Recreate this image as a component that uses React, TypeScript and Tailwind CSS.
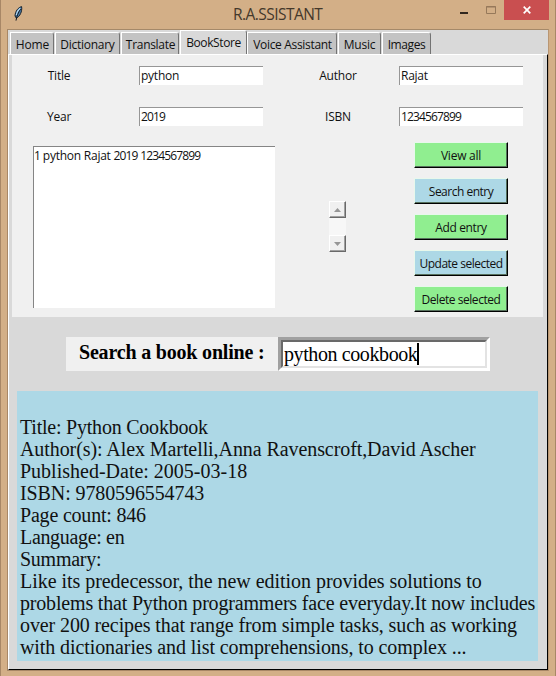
import React from "react";

const TABS = [
  { label: "Home", box: "w-[44px]", text: "tracking-[-0.1px] pl-px" },
  { label: "Dictionary", box: "w-[65px] ml-px", text: "tracking-[-0.27px]" },
  { label: "Translate", box: "w-[58px] ml-px", text: "tracking-[-0.3px] pl-px" },
  { label: "BookStore", box: "w-[67px] ml-px", text: "tracking-[-0.4px]", active: true },
  { label: "Voice Assistant", box: "w-[90px]", text: "tracking-[-0.32px] pl-px" },
  { label: "Music", box: "w-[43px] ml-px", text: "tracking-[-0.2px]" },
  { label: "Images", box: "w-[49px] ml-px", text: "tracking-[-0.4px]" },
];

const ACTIONS = [
  { label: "View all", color: "bg-[#90ee90] tracking-[-0.25px]" },
  { label: "Search entry", color: "bg-[#add8e6] tracking-[-0.5px]" },
  { label: "Add entry", color: "bg-[#90ee90] tracking-[-0.35px]" },
  { label: "Update selected", color: "bg-[#add8e6] tracking-[-0.5px]" },
  { label: "Delete selected", color: "bg-[#90ee90] tracking-[-0.45px]" },
];

const BOOK_LINES = [
  { text: "Title: Python Cookbook", spacing: "tracking-[-0.22px]" },
  { text: "Author(s): Alex Martelli,Anna Ravenscroft,David Ascher", spacing: "tracking-[-0.08px]" },
  { text: "Published-Date: 2005-03-18", spacing: "tracking-[0px]" },
  { text: "ISBN: 9780596554743", spacing: "tracking-[-0.1px]" },
  { text: "Page count: 846", spacing: "tracking-[-0.2px]" },
  { text: "Language: en", spacing: "tracking-[-0.33px]" },
  { text: "Summary:", spacing: "tracking-[-0.25px]" },
  { text: "Like its predecessor, the new edition provides solutions to", spacing: "tracking-[-0.04px]" },
  { text: "problems that Python programmers face everyday.It now includes", spacing: "tracking-[-0.18px]" },
  { text: "over 200 recipes that range from simple tasks, such as working", spacing: "tracking-[-0.11px]" },
  { text: "with dictionaries and list comprehensions, to complex ...", spacing: "tracking-[-0.09px]" },
];

function Feather() {
  return (
    <svg width="9" height="16" viewBox="0 0 9 16" className="ml-[13px] mt-[6px] shrink-0">
      <path d="M7.6 .6C4.4 1.4 1.2 5 1 10L2.4 12.2C5.8 10.4 8.4 5.6 7.6.6Z" fill="#4b7fae" stroke="#18212b" strokeWidth="1" />
      <path d="M6.2 2.2C4.2 3.8 2.8 6.4 2.4 9" stroke="#b9dcf2" strokeWidth="1.3" fill="none" />
      <path d="M6.6 3.2C4.4 6.4 2.8 9.6 2 14.6" stroke="#101820" strokeWidth="1" fill="none" />
    </svg>
  );
}

function TitleBar() {
  return (
    <header className="flex h-[29px] items-start">
      <Feather />
      <h1 className="ml-[210px] mt-[3px] w-[200px] whitespace-nowrap text-[15.5px] leading-[22px] tracking-[-0.55px] text-[#44382b]">
        R.A.SSISTANT
      </h1>
      <svg width="36" height="20" viewBox="0 0 36 20" className="ml-[27px] shrink-0">
        <rect x="0" y="12" width="8" height="2" fill="#30271e" />
        <path d="M26.5 6.5h9v7h-9zM26 7h10" fill="none" stroke="#96795a" />
      </svg>
      <div className="ml-[8px] flex h-5 w-[45px] shrink-0 items-center justify-center bg-[#c94f50]">
        <svg width="8" height="8" viewBox="0 0 8 8">
          <path d="M.7.7 7.3 7.3M7.3.7.7 7.3" stroke="white" strokeWidth="1.7" />
        </svg>
      </div>
    </header>
  );
}

function Tabs() {
  return (
    <nav className="flex h-6 items-end pl-[2px]">
      {TABS.map((t) => (
        <div
          key={t.label}
          className={`flex shrink-0 justify-center whitespace-nowrap rounded-tr-[3px] border-l border-r border-t border-l-white border-r-[#737373] border-t-white ${t.box} ${
            t.active ? "h-6 bg-[#d9d9d9] pt-[2px]" : "h-[22px] bg-[#c3c3c3] pt-[2px]"
          }`}
        >
          <span className={`leading-[19px] ${t.text}`}>{t.label}</span>
        </div>
      ))}
    </nav>
  );
}

// Digits are set tighter than letters so that numbers keep a 6px advance.
function Mixed({ children }: { children: string }) {
  return (
    <>
      {children.split(/(\d+)/).map((part, i) => (
        <span key={i} className={i % 2 ? "tracking-[-0.87px]" : "tracking-[-0.25px]"}>
          {part}
        </span>
      ))}
    </>
  );
}

function Field({ value }: { value: string }) {
  return (
    <div className="h-[19px] w-[124px] border-l border-t border-[#969696] bg-white pl-px leading-[17px]">
      <Mixed>{value}</Mixed>
    </div>
  );
}

function FormRow({ a, av, b, bv }: { a: string; av: string; b: string; bv: string }) {
  return (
    <div className="flex h-[19px] items-center">
      <div className="w-[94px] text-center">{a}</div>
      <div className="ml-[33px]"><Field value={av} /></div>
      <div className="ml-[30px] w-[90px] text-center">{b}</div>
      <div className="ml-[16px]"><Field value={bv} /></div>
    </div>
  );
}

function ScrollArrow({ down }: { down?: boolean }) {
  return (
    <div className="flex h-[17px] w-[17px] items-center justify-center border border-b-[#696969] border-l-white border-r-[#696969] border-t-white bg-[#f0f0f0] shadow-[inset_-1px_-1px_#a0a0a0]">
      <svg width="7" height="4" viewBox="0 0 7 4">
        <path d={down ? "M0 0H7L3.5 4Z" : "M0 4H7L3.5 0Z"} fill="#969696" />
      </svg>
    </div>
  );
}

export default function App() {
  return (
    <div className="flex h-[676px] w-[556px] flex-col overflow-hidden border-l border-r border-l-[#a88766] border-r-[#a88766] bg-[#d3af87] font-['Open_Sans','Noto_Sans',sans-serif] text-[12px] tracking-[-0.2px] text-[#111]">
      <TitleBar />
      <main className="ml-[6px] flex h-[642px] w-[542px] flex-col border border-b-[#a88766] border-l-[#a88766] border-r-[#b99672] border-t-[#a58969] bg-[#d9d9d9]">
        <Tabs />
        <div className="h-[616px] border-b border-l border-r border-t border-b-black border-l-white border-r-black border-t-white">
          <section className="ml-[3px] h-[262px] w-[531px] bg-[#f0f0f0] pt-[11px]">
            <FormRow a="Title" av="python" b="Author" bv="Rajat" />
            <div className="mt-[22px]">
              <FormRow a="Year" av="2019" b="ISBN" bv="1234567899" />
            </div>
            <div className="mt-[20px] flex items-start">
              <div className="ml-[21px] h-[162px] w-[242px] border-l border-t border-[#858585] bg-white leading-[17px]">
                <Mixed>1 python Rajat 2019 1234567899</Mixed>
              </div>
              <div className="ml-[54px] mt-[55px] flex h-[51px] w-[17px] flex-col justify-between bg-[#f7f7f7]">
                <ScrollArrow />
                <ScrollArrow down />
              </div>
              <div className="-mt-[4px] ml-[68px] flex flex-col gap-[10px]">
                {ACTIONS.map((x) => (
                  <button
                    key={x.label}
                    className={`h-[26px] w-[94px] whitespace-nowrap border border-b-black border-l-[#e8f8ec] border-r-black border-t-[#e8f8ec] pt-px text-center leading-[22px] shadow-[inset_-1px_-1px_#56705c] ${x.color}`}
                  >
                    {x.label}
                  </button>
                ))}
              </div>
            </div>
          </section>
          <section className="ml-[57px] mt-[20px] flex h-[34px] font-['Liberation_Serif',serif] text-black">
            <div className="w-[212px] whitespace-nowrap bg-[#f0f0f0] pl-[13px] text-[20px] font-bold leading-[31px] tracking-[-0.19px]">
              Search a book online :
            </div>
            <div className="h-[34px] w-[212px] border-[3px] border-b-white border-l-[#a0a0a0] border-r-white border-t-[#a0a0a0]">
              <div className="flex h-[28px] items-center border-2 border-b-[#e3e3e3] border-l-[#696969] border-r-[#e3e3e3] border-t-[#696969] bg-white pl-px">
                <span className="text-[20px] leading-[22px] tracking-[-0.4px]">python cookbook</span>
                <span className="h-[22px] w-[2px] bg-black" />
              </div>
            </div>
          </section>
          <section className="ml-[8px] mt-[20px] h-[270px] w-[521px] bg-[#add8e6] pl-[3px] pt-[25px] font-['Liberation_Serif',serif] text-[20px] leading-[22px]">
            {BOOK_LINES.map((l) => (
              <p key={l.text} className={`whitespace-nowrap ${l.spacing}`}>{l.text}</p>
            ))}
          </section>
        </div>
      </main>
    </div>
  );
}
